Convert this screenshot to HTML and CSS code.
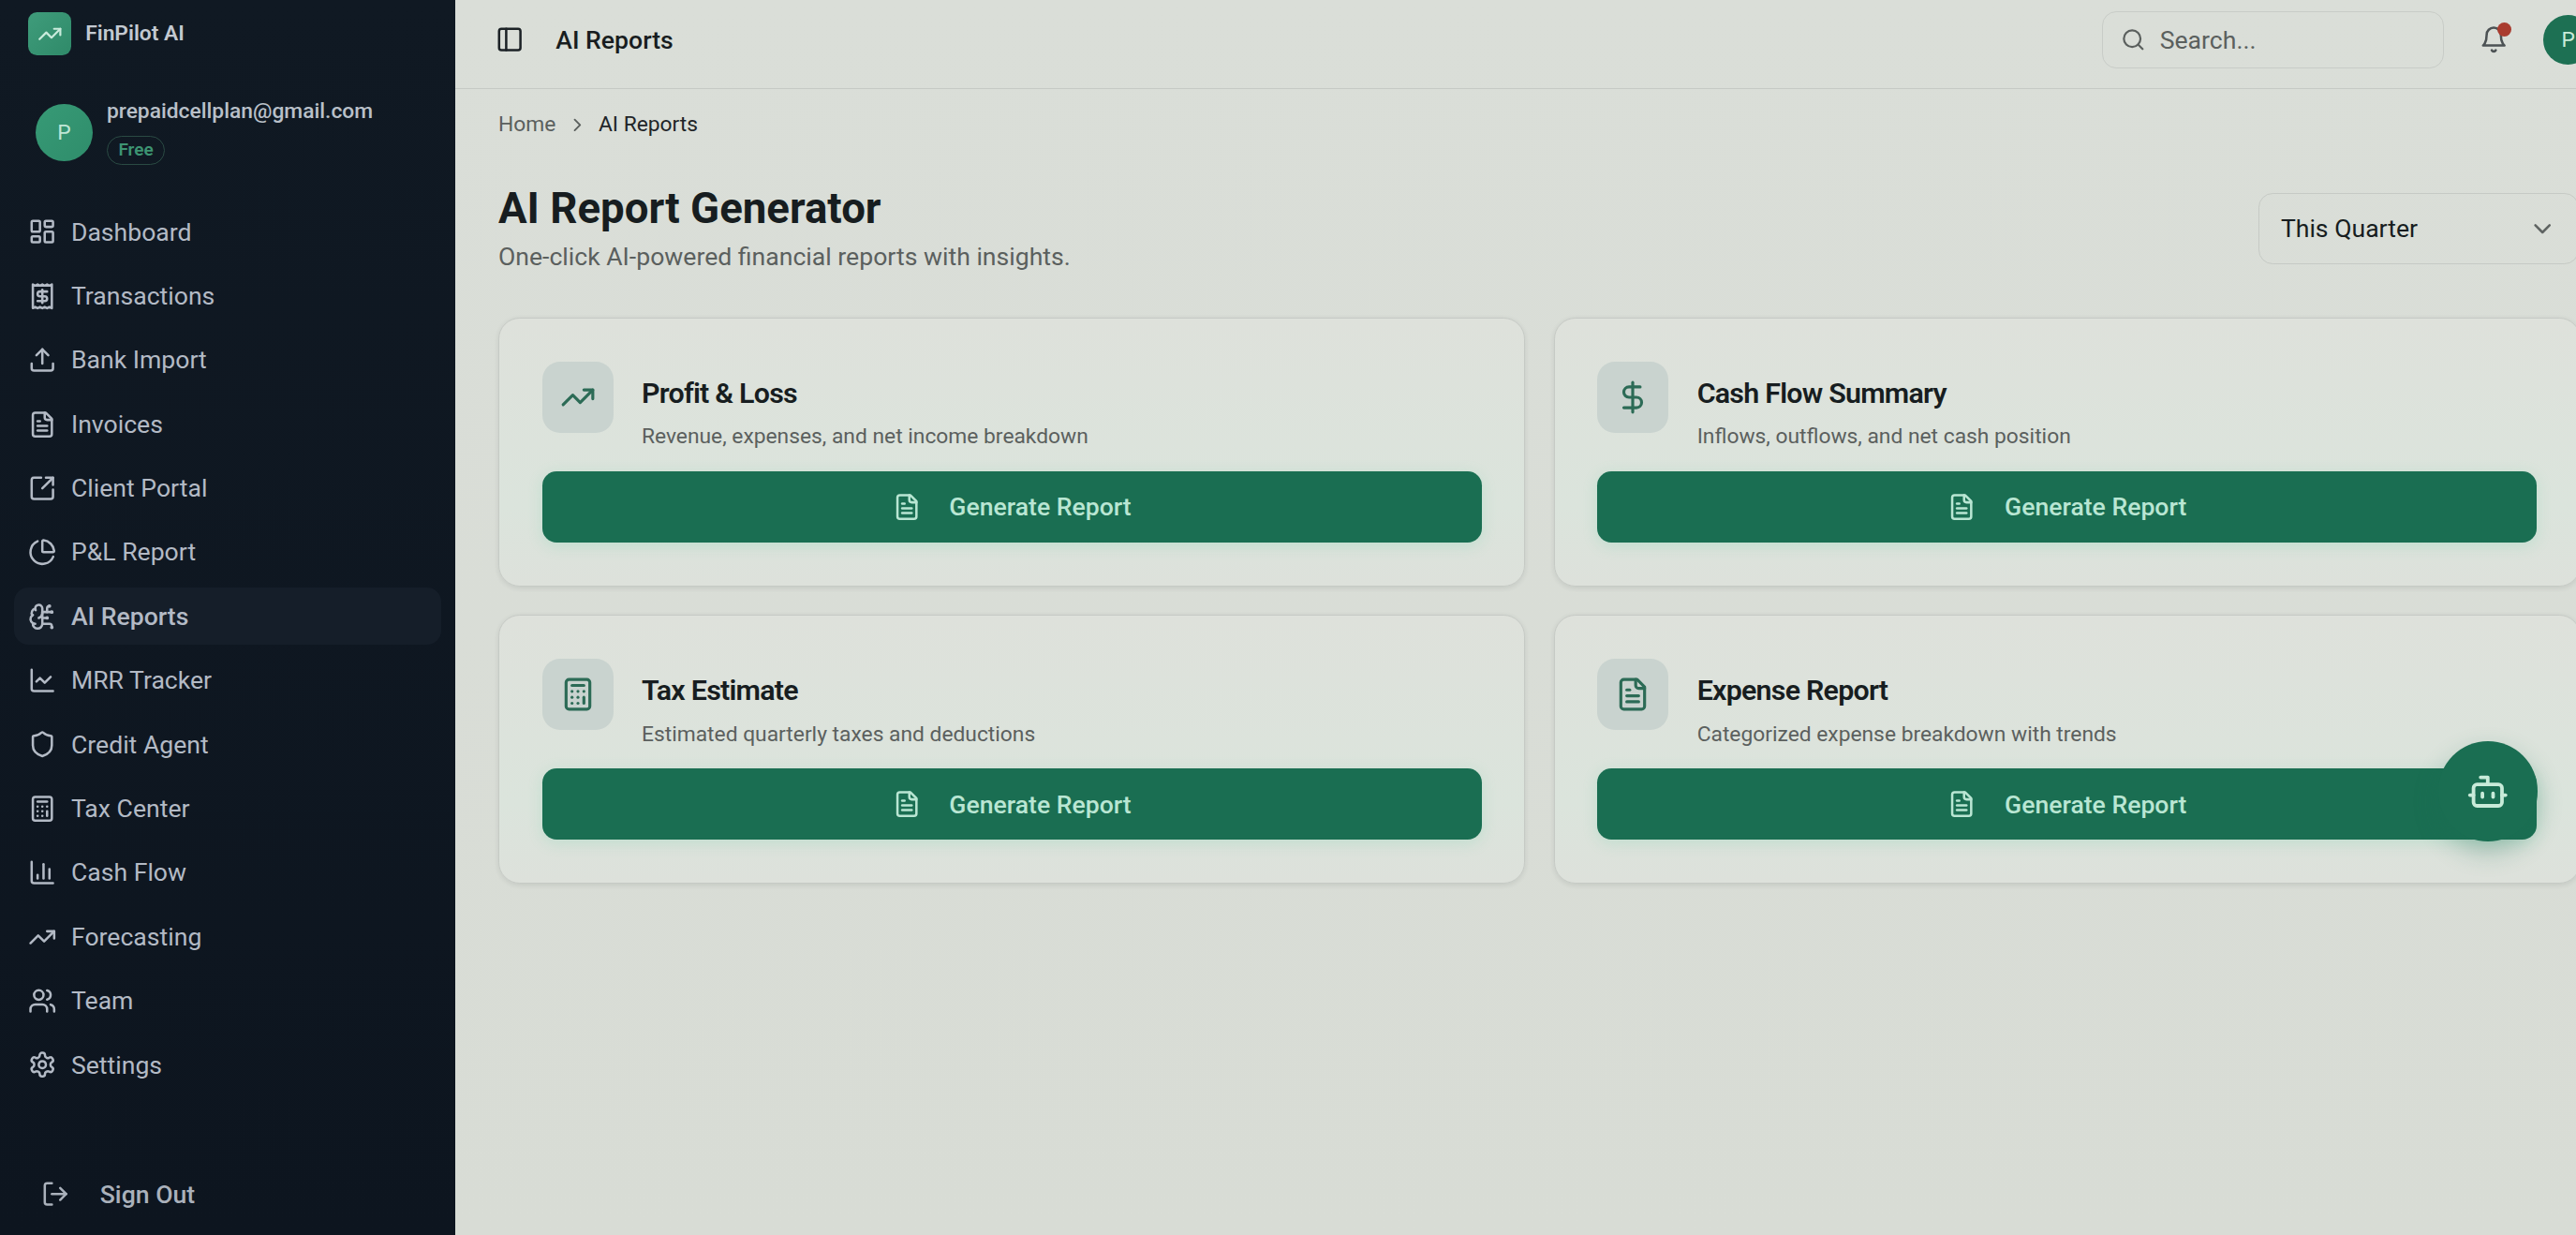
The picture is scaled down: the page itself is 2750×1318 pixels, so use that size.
FILE: index.html
```html
<!DOCTYPE html>
<html lang="en">
<head>
<meta charset="utf-8">
<title>AI Reports - FinPilot AI</title>
<link rel="stylesheet" href="styles.css">
</head>
<body>
<svg class="sprite" xmlns="http://www.w3.org/2000/svg" aria-hidden="true">
  <symbol id="i-trend" viewBox="0 0 24 24"><polyline points="22 7 13.5 15.5 8.5 10.5 2 17"/><polyline points="16 7 22 7 22 13"/></symbol>
  <symbol id="i-dash" viewBox="0 0 24 24"><rect x="3" y="3" width="7" height="9" rx="1"/><rect x="14" y="3" width="7" height="5" rx="1"/><rect x="14" y="12" width="7" height="9" rx="1"/><rect x="3" y="16" width="7" height="5" rx="1"/></symbol>
  <symbol id="i-receipt" viewBox="0 0 24 24"><path d="M4 2v20l2-1 2 1 2-1 2 1 2-1 2 1 2-1 2 1V2l-2 1-2-1-2 1-2-1-2 1-2-1-2 1Z"/><path d="M16 8h-6a2 2 0 1 0 0 4h4a2 2 0 1 1 0 4H8"/><path d="M12 17.5v-11"/></symbol>
  <symbol id="i-upload" viewBox="0 0 24 24"><path d="M21 15v4a2 2 0 0 1-2 2H5a2 2 0 0 1-2-2v-4"/><polyline points="17 8 12 3 7 8"/><line x1="12" y1="3" x2="12" y2="15"/></symbol>
  <symbol id="i-file" viewBox="0 0 24 24"><path d="M15 2H6a2 2 0 0 0-2 2v16a2 2 0 0 0 2 2h12a2 2 0 0 0 2-2V7Z"/><path d="M14 2v4a2 2 0 0 0 2 2h4"/><path d="M10 9H8"/><path d="M16 13H8"/><path d="M16 17H8"/></symbol>
  <symbol id="i-out" viewBox="0 0 24 24"><path d="M21 13v6a2 2 0 0 1-2 2H5a2 2 0 0 1-2-2V5a2 2 0 0 1 2-2h6"/><path d="m21 3-9 9"/><path d="M15 3h6v6"/></symbol>
  <symbol id="i-pie" viewBox="0 0 24 24"><path d="M21 12c.552 0 1.005-.449.95-.998a10 10 0 0 0-8.953-8.951c-.55-.055-.998.398-.998.95v8a1 1 0 0 0 1 1z"/><path d="M21.21 15.89A10 10 0 1 1 8 2.83"/></symbol>
  <symbol id="i-brain" viewBox="0 0 24 24"><path d="M12 5a3 3 0 1 0-5.997.125 4 4 0 0 0-2.526 5.77 4 4 0 0 0 .556 6.588A4 4 0 1 0 12 18Z"/><path d="M9 13a4.5 4.5 0 0 0 3-4"/><path d="M6.003 5.125A3 3 0 0 0 6.401 6.5"/><path d="M3.477 10.896a4 4 0 0 1 .585-.396"/><path d="M6 18a4 4 0 0 1-1.967-.516"/><path d="M12 13h4"/><path d="M12 18h6a2 2 0 0 1 2 2v1"/><path d="M12 8h8"/><path d="M16 8V5a2 2 0 0 1 2-2"/><circle cx="16" cy="13" r=".5"/><circle cx="18" cy="3" r=".5"/><circle cx="20" cy="21" r=".5"/><circle cx="20" cy="8" r=".5"/></symbol>
  <symbol id="i-line" viewBox="0 0 24 24"><path d="M3 3v16a2 2 0 0 0 2 2h16"/><path d="m19 9-5 5-4-4-3 3"/></symbol>
  <symbol id="i-shield" viewBox="0 0 24 24"><path d="M20 13c0 5-3.5 7.5-7.66 8.95a1 1 0 0 1-.67-.01C7.5 20.5 4 18 4 13V6a1 1 0 0 1 1-1c2 0 4.5-1.2 6.24-2.72a1.17 1.17 0 0 1 1.52 0C14.51 3.81 17 5 19 5a1 1 0 0 1 1 1z"/></symbol>
  <symbol id="i-calc" viewBox="0 0 24 24"><rect x="4" y="2" width="16" height="20" rx="2"/><line x1="8" y1="6" x2="16" y2="6"/><line x1="16" y1="14" x2="16" y2="18"/><path d="M16 10h.01"/><path d="M12 10h.01"/><path d="M8 10h.01"/><path d="M12 14h.01"/><path d="M8 14h.01"/><path d="M12 18h.01"/><path d="M8 18h.01"/></symbol>
  <symbol id="i-bars" viewBox="0 0 24 24"><path d="M3 3v16a2 2 0 0 0 2 2h16"/><path d="M18 17V9"/><path d="M13 17V5"/><path d="M8 17v-3"/></symbol>
  <symbol id="i-users" viewBox="0 0 24 24"><path d="M16 21v-2a4 4 0 0 0-4-4H6a4 4 0 0 0-4 4v2"/><circle cx="9" cy="7" r="4"/><path d="M22 21v-2a4 4 0 0 0-3-3.87"/><path d="M16 3.13a4 4 0 0 1 0 7.75"/></symbol>
  <symbol id="i-gear" viewBox="0 0 24 24"><path d="M12.22 2h-.44a2 2 0 0 0-2 2v.18a2 2 0 0 1-1 1.73l-.43.25a2 2 0 0 1-2 0l-.15-.08a2 2 0 0 0-2.73.73l-.22.38a2 2 0 0 0 .73 2.73l.15.1a2 2 0 0 1 1 1.72v.51a2 2 0 0 1-1 1.74l-.15.09a2 2 0 0 0-.73 2.73l.22.38a2 2 0 0 0 2.73.73l.15-.08a2 2 0 0 1 2 0l.43.25a2 2 0 0 1 1 1.73V20a2 2 0 0 0 2 2h.44a2 2 0 0 0 2-2v-.18a2 2 0 0 1 1-1.73l.43-.25a2 2 0 0 1 2 0l.15.08a2 2 0 0 0 2.73-.73l.22-.39a2 2 0 0 0-.73-2.73l-.15-.08a2 2 0 0 1-1-1.74v-.5a2 2 0 0 1 1-1.74l.15-.09a2 2 0 0 0 .73-2.73l-.22-.38a2 2 0 0 0-2.73-.73l-.15.08a2 2 0 0 1-2 0l-.43-.25a2 2 0 0 1-1-1.73V4a2 2 0 0 0-2-2z"/><circle cx="12" cy="12" r="3"/></symbol>
  <symbol id="i-logout" viewBox="0 0 24 24"><path d="M9 21H5a2 2 0 0 1-2-2V5a2 2 0 0 1 2-2h4"/><polyline points="16 17 21 12 16 7"/><line x1="21" y1="12" x2="9" y2="12"/></symbol>
  <symbol id="i-panel" viewBox="0 0 24 24"><rect x="3" y="3" width="18" height="18" rx="2"/><path d="M9 3v18"/></symbol>
  <symbol id="i-search" viewBox="0 0 24 24"><circle cx="11" cy="11" r="8"/><path d="m21 21-4.3-4.3"/></symbol>
  <symbol id="i-bell" viewBox="0 0 24 24"><path d="M6 8a6 6 0 0 1 12 0c0 7 3 9 3 9H3s3-2 3-9"/><path d="M10.3 21a1.94 1.94 0 0 0 3.4 0"/></symbol>
  <symbol id="i-right" viewBox="0 0 24 24"><path d="m9 18 6-6-6-6"/></symbol>
  <symbol id="i-down" viewBox="0 0 24 24"><path d="m6 9 6 6 6-6"/></symbol>
  <symbol id="i-dollar" viewBox="0 0 24 24"><line x1="12" y1="2" x2="12" y2="22"/><path d="M17 5H9.5a3.5 3.5 0 0 0 0 7h5a3.5 3.5 0 0 1 0 7H6"/></symbol>
  <symbol id="i-bot" viewBox="0 0 24 24"><path d="M12 8V4H8"/><rect x="4" y="8" width="16" height="12" rx="2"/><path d="M2 14h2"/><path d="M20 14h2"/><path d="M15 13v2"/><path d="M9 13v2"/></symbol>
</svg>

<div class="app">
  <aside class="sidebar">
    <div class="brand">
      <span class="brand-mark"><svg class="icon icon-14"><use href="#i-trend"/></svg></span>
      <span class="brand-name">FinPilot AI</span>
    </div>
    <div class="profile">
      <span class="profile-avatar">P</span>
      <div class="profile-text">
        <div class="profile-email">prepaidcellplan@gmail.com</div>
        <span class="plan-badge">Free</span>
      </div>
    </div>
    <nav class="nav">
      <a class="nav-item"><svg class="icon"><use href="#i-dash"/></svg><span>Dashboard</span></a>
      <a class="nav-item"><svg class="icon"><use href="#i-receipt"/></svg><span>Transactions</span></a>
      <a class="nav-item"><svg class="icon"><use href="#i-upload"/></svg><span>Bank Import</span></a>
      <a class="nav-item"><svg class="icon"><use href="#i-file"/></svg><span>Invoices</span></a>
      <a class="nav-item"><svg class="icon"><use href="#i-out"/></svg><span>Client Portal</span></a>
      <a class="nav-item"><svg class="icon"><use href="#i-pie"/></svg><span>P&amp;L Report</span></a>
      <a class="nav-item is-active"><svg class="icon"><use href="#i-brain"/></svg><span>AI Reports</span></a>
      <a class="nav-item"><svg class="icon"><use href="#i-line"/></svg><span>MRR Tracker</span></a>
      <a class="nav-item"><svg class="icon"><use href="#i-shield"/></svg><span>Credit Agent</span></a>
      <a class="nav-item"><svg class="icon"><use href="#i-calc"/></svg><span>Tax Center</span></a>
      <a class="nav-item"><svg class="icon"><use href="#i-bars"/></svg><span>Cash Flow</span></a>
      <a class="nav-item"><svg class="icon"><use href="#i-trend"/></svg><span>Forecasting</span></a>
      <a class="nav-item"><svg class="icon"><use href="#i-users"/></svg><span>Team</span></a>
      <a class="nav-item"><svg class="icon"><use href="#i-gear"/></svg><span>Settings</span></a>
    </nav>
    <button class="signout"><svg class="icon"><use href="#i-logout"/></svg><span>Sign Out</span></button>
  </aside>

  <div class="main">
    <header class="topbar">
      <button class="icon-btn"><svg class="icon"><use href="#i-panel"/></svg></button>
      <span class="topbar-title">AI Reports</span>
      <div class="topbar-right">
        <label class="search"><svg class="icon icon-14"><use href="#i-search"/></svg><span>Search...</span></label>
        <button class="bell"><svg class="icon"><use href="#i-bell"/></svg><span class="bell-dot"></span></button>
        <span class="user-avatar">P</span>
      </div>
    </header>

    <main class="content">
      <div class="crumbs">
        <span>Home</span>
        <svg class="icon icon-12"><use href="#i-right"/></svg>
        <span class="crumb-current">AI Reports</span>
      </div>
      <div class="page-head">
        <div>
          <h1>AI Report Generator</h1>
          <p>One-click AI-powered financial reports with insights.</p>
        </div>
        <div class="period"><span>This Quarter</span><svg class="icon"><use href="#i-down"/></svg></div>
      </div>

      <div class="grid">
        <section class="card">
          <div class="card-head">
            <span class="card-icon"><svg class="icon icon-20"><use href="#i-trend"/></svg></span>
            <div class="card-text"><h2>Profit &amp; Loss</h2><p>Revenue, expenses, and net income breakdown</p></div>
          </div>
          <button class="generate"><svg class="icon"><use href="#i-file"/></svg><span>Generate Report</span></button>
        </section>
        <section class="card">
          <div class="card-head">
            <span class="card-icon"><svg class="icon icon-20"><use href="#i-dollar"/></svg></span>
            <div class="card-text"><h2>Cash Flow Summary</h2><p>Inflows, outflows, and net cash position</p></div>
          </div>
          <button class="generate"><svg class="icon"><use href="#i-file"/></svg><span>Generate Report</span></button>
        </section>
        <section class="card">
          <div class="card-head">
            <span class="card-icon"><svg class="icon icon-20"><use href="#i-calc"/></svg></span>
            <div class="card-text"><h2>Tax Estimate</h2><p>Estimated quarterly taxes and deductions</p></div>
          </div>
          <button class="generate"><svg class="icon"><use href="#i-file"/></svg><span>Generate Report</span></button>
        </section>
        <section class="card">
          <div class="card-head">
            <span class="card-icon"><svg class="icon icon-20"><use href="#i-file"/></svg></span>
            <div class="card-text"><h2>Expense Report</h2><p>Categorized expense breakdown with trends</p></div>
          </div>
          <button class="generate"><svg class="icon"><use href="#i-file"/></svg><span>Generate Report</span></button>
        </section>
      </div>
    </main>
  </div>

  <button class="fab"><svg class="icon icon-24"><use href="#i-bot"/></svg></button>
</div>
</body>
</html>
```

FILE: styles.css
```css
* { box-sizing: border-box; }
html, body { margin: 0; padding: 0; overflow: hidden; background: #d9ddd6; }
body { width: 2750px; height: 1318px; font-family: Roboto, "Liberation Sans", sans-serif; }
.sprite { display: none; }
button { font: inherit; border: 0; background: none; color: inherit; padding: 0; }

/* the whole interface is laid out in 1x units and scaled up, as the browser zoom did */
.app { zoom: 1.9; position: relative; display: flex; width: 1473px; height: 693.7px; overflow: hidden; }

.icon { width: 16px; height: 16px; flex: none; display: block; fill: none; stroke: currentColor; stroke-width: 2; stroke-linecap: round; stroke-linejoin: round; }
.icon-12 { width: 12px; height: 12px; }
.icon-14 { width: 14px; height: 14px; }
.icon-20 { width: 20px; height: 20px; }
.icon-24 { width: 24px; height: 24px; }

/* Sidebar */
.sidebar { width: 256px; flex: none; height: 100%; display: flex; flex-direction: column; background: linear-gradient(180deg, #101923 0%, #0d151f 100%); color: #b3bac5; }
.brand { display: flex; align-items: center; gap: 8px; padding: 7px 16px 0; }
.brand-mark { width: 24px; height: 24px; border-radius: 5px; display: flex; align-items: center; justify-content: center; background: linear-gradient(135deg, #3f9c7b, #2f8a69); color: #c9ebdc; }
.brand-name { font-size: 12px; font-weight: 600; line-height: 16px; color: #c3c9d1; }
.profile { display: flex; align-items: center; gap: 8px; margin-top: 23.6px; padding-left: 20px; }
.profile-avatar { width: 32px; height: 32px; border-radius: 50%; display: flex; align-items: center; justify-content: center; background: linear-gradient(135deg, #379a76, #2f8d6b); color: #bfe6d5; font-size: 12px; position: relative; top: 1px; }
.profile-email { font-size: 12px; font-weight: 500; line-height: 16px; color: #b9c0c9; }
.plan-badge { display: inline-block; margin-top: 5.7px; height: 16.3px; padding: 0 6px; border: 1px solid #2a4a43; border-radius: 9px; font-size: 10px; font-weight: 600; line-height: 14.3px; color: #3d9472; }
.nav { display: flex; flex-direction: column; gap: 4px; margin-top: 21.7px; padding: 0 8px; }
.nav-item { display: flex; align-items: center; gap: 8px; height: 32px; padding: 0 8px; border-radius: 8px; font-size: 14px; line-height: 20px; }
.nav-item.is-active { background: #151e29; font-weight: 500; }
.signout { margin-top: auto; margin-bottom: 3px; display: flex; align-items: center; gap: 17px; height: 40px; padding-left: 23.2px; font-size: 14px; font-weight: 500; color: #aab1bb; text-align: left; }

/* Top bar */
.main { flex: 1; min-width: 0; height: 100%; background: linear-gradient(180deg, #dadeD8 0%, #d8dcd5 100%); }
.topbar { display: flex; align-items: center; gap: 12px; height: 50px; padding: 0 16px 5px 16.3px; border-bottom: 1px solid #c6cac5; }
.icon-btn { width: 28px; height: 28px; display: flex; align-items: center; justify-content: center; color: #1c2226; }
.topbar-title { font-size: 14px; font-weight: 500; color: #181d20; }
.topbar-right { margin-left: auto; display: flex; align-items: center; gap: 12px; }
.search { width: 192px; height: 32px; display: flex; align-items: center; gap: 8px; padding-left: 10px; border: 1px solid #c8ccc7; border-radius: 8px; font-size: 14px; color: #5b605e; }
.bell { position: relative; width: 32px; height: 32px; display: flex; align-items: center; justify-content: center; color: #4c5254; }
.bell-dot { position: absolute; top: 6.2px; right: 5.9px; width: 8px; height: 8px; border-radius: 50%; background: #a93c2f; }
.user-avatar { width: 28px; height: 28px; border-radius: 50%; display: flex; align-items: center; justify-content: center; background: #1d7053; color: #c8ebd9; font-size: 12px; }

/* Content */
.content { padding: 12.3px 24px 0; }
.crumbs { display: flex; align-items: center; gap: 6px; height: 16px; font-size: 12px; line-height: 16px; color: #5b605e; }
.crumb-current { color: #1f2528; }
.page-head { display: flex; justify-content: space-between; align-items: flex-start; margin-top: 23.1px; }
h1 { margin: 0; font-size: 24px; font-weight: 700; line-height: 32px; color: #171d20; }
.page-head p { margin: .6px 0 0; font-size: 14px; line-height: 20px; color: #5b605e; }
.period { width: 180px; height: 40px; margin-top: 7px; flex: none; display: flex; align-items: center; justify-content: space-between; padding: 0 12px; border: 1px solid #c6cac5; border-radius: 8px; font-size: 14px; color: #171d20; }
.period .icon { color: #5f6462; }
.grid { display: grid; grid-template-columns: 577px 577px; gap: 16px; margin-top: 24.5px; }
.card { padding: 0 24px 24px; height: 151px; border: 1px solid #c6cac5; border-radius: 12px; background: linear-gradient(180deg, #dee1db 0%, #dbe4dc 70%, #dde1db 100%); box-shadow: 0 1px 3px rgba(40, 50, 45, .1); }
.card-head { display: flex; gap: 16px; padding-top: 24px; }
.card-icon { width: 40px; height: 40px; flex: none; border-radius: 10px; display: flex; align-items: center; justify-content: center; background: #c9d3cf; color: #2c6b56; }
.card-text { padding-top: 6px; }
h2 { margin: 0; font-size: 16px; font-weight: 600; line-height: 24px; letter-spacing: -.4px; color: #171d20; }
.card-text p { margin: 4.5px 0 0; font-size: 12px; line-height: 16px; color: #5b605e; }
.generate { width: 100%; height: 40px; margin-top: 11.2px; display: flex; align-items: center; justify-content: center; gap: 16px; border-radius: 8px; background: #1a6e52; color: #b9e6d3; font-size: 14px; font-weight: 500; box-shadow: 0 2px 8px rgba(100, 210, 165, .22); }

.fab { position: absolute; top: 416.5px; right: 47px; width: 56px; height: 56px; border-radius: 50%; display: flex; align-items: center; justify-content: center; background: #1a6e52; color: #c8ebd9; box-shadow: 0 6px 14px rgba(26, 110, 82, .3); }
```
